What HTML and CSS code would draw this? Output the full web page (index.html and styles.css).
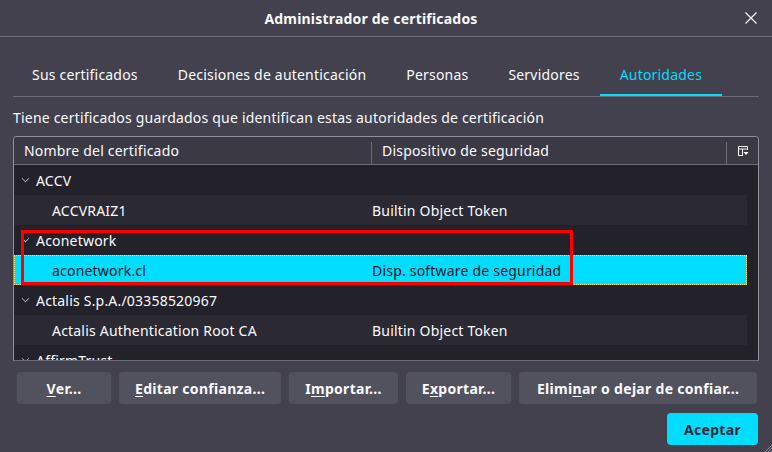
FILE: index.html
```html
<!DOCTYPE html>
<html lang="es">
<head>
  <meta charset="UTF-8">
  <title>Administrador de certificados</title>
  <link rel="stylesheet" href="styles.css">
</head>
<body>
  <div class="dialog">
    <div class="titlebar">
      <span class="title">Administrador de certificados</span>
      <svg class="close" width="12" height="12" viewBox="0 0 12 12">
        <path d="M0.5 0.5 L11.5 11.5 M11.5 0.5 L0.5 11.5" stroke="#fbfbfe" stroke-width="1.2" fill="none"/>
      </svg>
    </div>

    <div class="tabs">
      <div class="tab">Sus certificados</div>
      <div class="tab">Decisiones de autenticación</div>
      <div class="tab">Personas</div>
      <div class="tab">Servidores</div>
      <div class="tab active">Autoridades</div>
    </div>

    <p class="intro">Tiene certificados guardados que identifican estas autoridades de certificación</p>

    <div class="tree">
      <div class="treeHead">
        <div class="col colName">Nombre del certificado</div>
        <div class="col colDevice">Dispositivo de seguridad</div>
        <div class="col colPicker">
          <svg width="11" height="10" viewBox="0 0 11 10">
            <path d="M0.5 0.5 H9.5 V4 M0.5 0.5 V9.5 H5 M0.5 3 H9.5 M4.5 3 V9.5" stroke="#fbfbfe" stroke-width="1" fill="none"/>
            <path d="M5.5 6 H10.5 L8 9 Z" fill="#fbfbfe"/>
          </svg>
        </div>
      </div>
      <div class="treeBody">
        <div class="row group">
          <div class="cell name"><span class="twisty"></span>ACCV</div>
          <div class="cell"></div>
        </div>
        <div class="row child alt">
          <div class="cell name">ACCVRAIZ1</div>
          <div class="cell">Builtin Object Token</div>
        </div>
        <div class="row group">
          <div class="cell name"><span class="twisty"></span>Aconetwork</div>
          <div class="cell"></div>
        </div>
        <div class="row child selected">
          <div class="cell name">aconetwork.cl</div>
          <div class="cell">Disp. software de seguridad</div>
        </div>
        <div class="row group">
          <div class="cell name"><span class="twisty"></span>Actalis S.p.A./03358520967</div>
          <div class="cell"></div>
        </div>
        <div class="row child alt">
          <div class="cell name">Actalis Authentication Root CA</div>
          <div class="cell">Builtin Object Token</div>
        </div>
        <div class="row group">
          <div class="cell name"><span class="twisty"></span>AffirmTrust</div>
          <div class="cell"></div>
        </div>
      </div>
      <div class="highlight"></div>
    </div>

    <div class="actions">
      <button class="btn btnView"><u>V</u>er...</button>
      <button class="btn"><u>E</u>ditar confianza...</button>
      <button class="btn">I<u>m</u>portar...</button>
      <button class="btn">E<u>x</u>portar...</button>
      <button class="btn btnWide">Elimi<u>n</u>ar o dejar de confiar...</button>
    </div>

    <div class="footer">
      <button class="btn primary">Aceptar</button>
    </div>

    <svg class="grip" width="8" height="8" viewBox="0 0 8 8">
      <path d="M8 1 L1 8 M8 4 L4 8 M8 7 L7 8" stroke="#8f8f9d" stroke-width="1" fill="none"/>
    </svg>
  </div>
</body>
</html>
```

FILE: styles.css
```css
* {
  margin: 0;
  padding: 0;
  box-sizing: border-box;
}
body {
  background: #42414d;
  color: #fbfbfe;
  font-family: "Noto Sans", "DejaVu Sans", sans-serif;
  font-size: 14px;
  letter-spacing: 0.2px;
  width: 772px;
  height: 452px;
  overflow: hidden;
}
.dialog {
  position: relative;
  height: 452px;
}
.titlebar {
  display: flex;
  align-items: center;
  height: 37px;
  border-bottom: 1px solid #6b6a75;
}
.title {
  flex: 1;
  text-align: center;
  font-weight: bold;
  line-height: 17px;
}
.close {
  margin: 0 15px 0 3px;
}
.tabs {
  display: flex;
  margin: 17px 13px 0;
  border-bottom: 1px solid #6b6a75;
}
.tab {
  padding: 12px 20px 11px;
  line-height: 17px;
  border-bottom: 2px solid transparent;
}
.tab:first-child {
  padding-left: 19px;
}
.tab.active {
  color: #00ddff;
  border-bottom-color: #00ddff;
}
.intro {
  margin: 12px 13px 10px;
  line-height: 17px;
}
.tree {
  position: relative;
  margin: 0 13px;
  height: 225px;
  border: 1px solid #8f8f9d;
  border-bottom-color: #6b6a75;
  border-radius: 4px 4px 0 0;
  background: #23222b;
  overflow: hidden;
}
.treeHead {
  display: flex;
  height: 28px;
  background: #3a3944;
  border-bottom: 1px solid #6b6a75;
}
.col {
  display: flex;
  align-items: center;
  line-height: 17px;
}
.colName {
  width: 357px;
  padding-left: 10px;
}
.colDevice {
  flex: 1;
  padding-left: 10px;
  border-left: 1px solid #6b6a75;
  margin: 5px 0 0;
  padding-bottom: 5px;
}
.colPicker {
  width: 32px;
  padding-left: 11px;
  border-left: 1px solid #6b6a75;
  margin: 5px 0 0;
  padding-bottom: 5px;
}
.treeBody {
  padding-right: 11px;
}
.row {
  display: flex;
  height: 30px;
  align-items: center;
  line-height: 17px;
}
.row.alt {
  background: #2b2a33;
}
.row.selected {
  background: #00ddff;
  color: #15141a;
  outline: 1px dotted #f2df6b;
  outline-offset: -1px;
}
.cell.name {
  width: 358px;
  display: flex;
  align-items: center;
}
.group .name {
  padding-left: 8px;
}
.child .name {
  padding-left: 38px;
}
.twisty {
  width: 7px;
  height: 7px;
  margin: 0 7px 3px 0;
  border-right: 1px solid #bfbfc9;
  border-bottom: 1px solid #bfbfc9;
  transform: scale(0.75) rotate(45deg);
}
.highlight {
  position: absolute;
  left: 7px;
  top: 93px;
  width: 552px;
  height: 55px;
  border: 3px solid #ff0000;
}
.actions {
  display: flex;
  gap: 8px;
  margin: 11px 15px 0 17px;
}
.btn {
  height: 32px;
  padding: 0 16px;
  border: none;
  border-radius: 4px;
  background: #52515e;
  color: #fbfbfe;
  font-family: inherit;
  font-size: 14px;
  font-weight: bold;
  letter-spacing: 0.3px;
}
.btn u {
  text-underline-offset: 2px;
}
.btnView {
  min-width: 94px;
}
.btnWide {
  flex: 1;
}
.footer {
  display: flex;
  justify-content: flex-end;
  margin: 9px 14px 0;
}
.primary {
  background: #00ddff;
  color: #2b2a33;
  padding: 0 17px;
}
.grip {
  position: absolute;
  right: 0;
  bottom: 0;
}
```
